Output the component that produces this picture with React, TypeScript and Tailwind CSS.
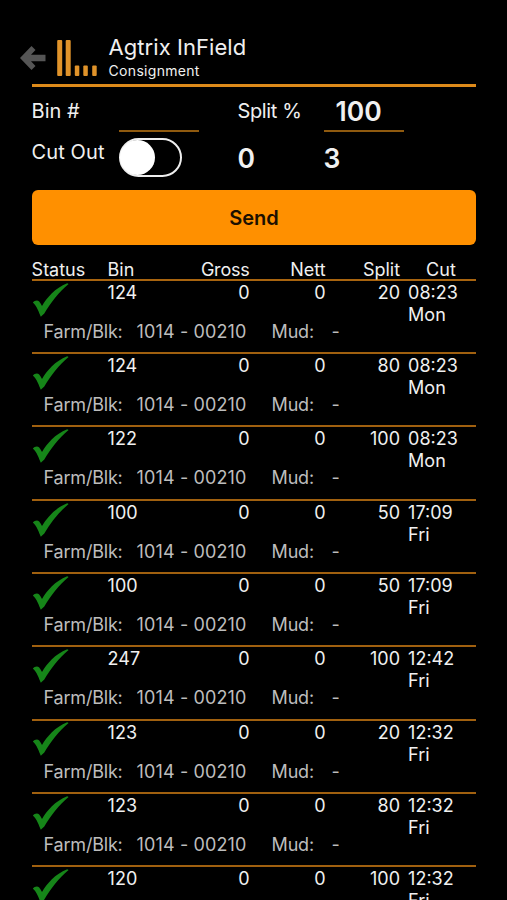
type Consignment = {
  bin: string;
  gross: string;
  nett: string;
  split: string;
  time: string;
  day: string;
};

const consignments: Consignment[] = [
  { bin: "124", gross: "0", nett: "0", split: "20", time: "08:23", day: "Mon" },
  { bin: "124", gross: "0", nett: "0", split: "80", time: "08:23", day: "Mon" },
  { bin: "122", gross: "0", nett: "0", split: "100", time: "08:23", day: "Mon" },
  { bin: "100", gross: "0", nett: "0", split: "50", time: "17:09", day: "Fri" },
  { bin: "100", gross: "0", nett: "0", split: "50", time: "17:09", day: "Fri" },
  { bin: "247", gross: "0", nett: "0", split: "100", time: "12:42", day: "Fri" },
  { bin: "123", gross: "0", nett: "0", split: "20", time: "12:32", day: "Fri" },
  { bin: "123", gross: "0", nett: "0", split: "80", time: "12:32", day: "Fri" },
  { bin: "120", gross: "0", nett: "0", split: "100", time: "12:32", day: "Fri" },
];

const BackArrow = () => (
  <svg width="26" height="24" viewBox="0 0 26 24" fill="#555555">
    <path d="M0 12 L11.5 0 L15.5 4 L11 8.8 H25.5 V15.2 H11 L15.5 20 L11.5 24 Z" />
  </svg>
);

const Logo = () => (
  <svg width="41" height="36" viewBox="0 0 41 36" fill="#e0932a">
    <rect x="0.2" y="0" width="5" height="36" rx="1" />
    <rect x="8.7" y="0" width="5" height="36" rx="1" />
    <rect x="17.8" y="25.5" width="4.5" height="10.5" rx="1" />
    <rect x="26.3" y="25.5" width="4.5" height="10.5" rx="1" />
    <rect x="35.2" y="25.5" width="4.5" height="10.5" rx="1" />
  </svg>
);

const Tick = () => (
  <svg width="37" height="34" viewBox="0 0 37 34" fill="#168519">
    <path d="M0.8 19.6 C2.5 17.3 5.5 16.6 7.2 18.4 C8.4 19.8 9.2 21.4 10 23 C15 14.8 23 5 35.2 0.3 L36.6 0.9 C27.5 8.5 18.5 19.5 12.3 30.5 L8.8 33.7 C6.8 29.5 5.2 23.5 0.8 19.6 Z" />
  </svg>
);

// Column layout shared by the table header and the rows
const columns = "grid grid-cols-[76px_66px_76px_76px_74.5px_76px]";

const ConsignmentRow = ({ item }: { item: Consignment }) => (
  <div className="h-[73.3px] shrink-0 border-b-2 border-[#a0600f] pt-[1.1px]">
    <div className={`${columns} h-[39px] leading-[22px] text-[#f0f0f0]`}>
      <div className="pt-[0.8px]">
        <Tick />
      </div>
      <span>{item.bin}</span>
      <span className="text-right">{item.gross}</span>
      <span className="text-right">{item.nett}</span>
      <span className="text-right">{item.split}</span>
      <span className="pl-2">
        {item.time}
        <br />
        {item.day}
      </span>
    </div>
    <div className="flex pl-3 leading-[22px] text-[#bdbdbd]">
      <span className="w-[93px] tracking-[-0.2px]">Farm/Blk:</span>
      <span className="w-[135px] tracking-[0.12px]">1014 - 00210</span>
      <span className="w-[60px] tracking-[-0.2px]">Mud:</span>
      <span>-</span>
    </div>
  </div>
);

export default function App() {
  return (
    <div className="flex h-[900px] w-[507px] flex-col overflow-hidden whitespace-nowrap bg-black pl-[31.6px] pr-[30.6px] pt-[33.5px] font-['Inter',sans-serif] text-[18px] text-[#f0f0f0]">
      {/* Title bar */}
      <div className="-ml-3 flex h-[50.3px] shrink-0">
        <div className="w-[37px] pt-[12.5px]">
          <BackArrow />
        </div>
        <div className="w-[52px] pt-[6.5px]">
          <Logo />
        </div>
        <div>
          <p className="text-[22px] leading-[26px] tracking-[0.05px]">Agtrix InField</p>
          <p className="text-[14px] leading-[22px] tracking-[0.3px]">Consignment</p>
        </div>
      </div>
      <div className="h-[2.8px] shrink-0 bg-[#dd8a1a]" />

      {/* Entry form */}
      <div className="grid h-[103.6px] shrink-0 grid-cols-[87px_119px_86px_80px] grid-rows-[45px_58.6px] text-[20px]">
        <span className="pt-[10px] leading-[28px]">Bin #</span>
        <div className="h-[45px] w-20 border-b-2 border-[#8f5a0f]" />
        <span className="pt-[10px] leading-[28px] tracking-[-0.4px]">Split %</span>
        <div className="h-[45px] w-20 border-b-2 border-[#8f5a0f] pt-2 pl-3 text-[26.5px] font-semibold leading-8">
          100
        </div>
        <span className="pt-[6px] leading-[28px] tracking-[0.1px]">Cut Out</span>
        <div className="mt-[6.6px] h-[38.5px] w-[63px] rounded-full border-2 border-[#eeeeee]">
          <div className="-ml-px size-[35px] rounded-full bg-white" />
        </div>
        <span className="pt-[10px] text-[26.5px] font-semibold leading-8">0</span>
        <span className="pt-[10px] text-[26.5px] font-semibold leading-8">3</span>
      </div>

      <button className="h-[55px] shrink-0 rounded-md bg-[#ff9000] text-[20px] font-semibold text-[#1c1000]">
        Send
      </button>

      {/* Consignment table */}
      <div className={`${columns} mt-[12.6px] h-[23px] shrink-0 border-b-2 border-[#a8640f] leading-[24px]`}>
        <span>Status</span>
        <span>Bin</span>
        <span className="text-right tracking-[-0.2px]">Gross</span>
        <span className="text-right">Nett</span>
        <span className="text-right">Split</span>
        <span className="pl-[26px]">Cut</span>
      </div>
      {consignments.map((item, index) => (
        <ConsignmentRow key={index} item={item} />
      ))}
    </div>
  );
}
